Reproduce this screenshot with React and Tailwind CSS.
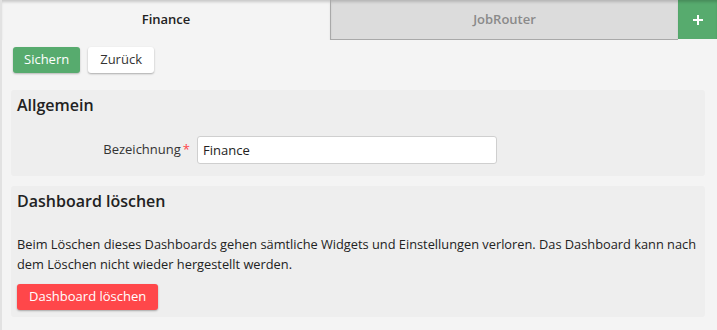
export default function App() {
  const tabShadow = 'shadow-[inset_0_3px_3px_-1px_rgba(0,0,0,0.18)]';

  return (
    <div
      className="min-h-[330px] bg-[#f4f4f4] border-l-2 border-[#e2e2e2] text-[13px] text-[#333]"
      style={{ fontFamily: '"Open Sans", "Liberation Sans", sans-serif' }}
    >
      {/* Tabs */}
      <div className="flex h-[40px]">
        <div className={`w-[328px] flex items-center justify-center font-semibold text-[#222] bg-[#f4f4f4] ${tabShadow}`}>
          Finance
        </div>
        <div className={`flex-1 flex items-center justify-center font-semibold text-[#8a8a8a] bg-[#dcdcdc] border-l border-b border-[#a9a9a9] ${tabShadow}`}>
          JobRouter
        </div>
        <button className={`w-[39px] h-[39px] flex items-center justify-center bg-[#57ab6e] text-white ${tabShadow}`}>
          <svg width="12" height="12" viewBox="0 0 12 12">
            <path d="M6 1v10M1 6h10" stroke="white" strokeWidth="2" />
          </svg>
        </button>
      </div>

      {/* Actions */}
      <div className="flex gap-2 pl-[11px] mt-[7px]">
        <button className="h-[26px] px-[11px] rounded-[3px] bg-[#57ab6e] text-white shadow-[0_1px_2px_rgba(0,0,0,0.25)]">
          Sichern
        </button>
        <button className="h-[26px] px-3 rounded-[3px] bg-white text-[#333] shadow-[0_1px_2px_rgba(0,0,0,0.3)]">
          Zurück
        </button>
      </div>

      <div className="pl-[9px] pr-[12px] mt-[17px] flex flex-col gap-[10px]">
        {/* Allgemein */}
        <section className="bg-[#eeeeee] rounded-[3px] px-[6px] pt-[4px] pb-[12px]">
          <h2 className="text-[16px] leading-[22px] font-semibold text-[#222]">Allgemein</h2>
          <div className="flex items-center mt-[20px]">
            <label className="w-[180px] pr-[7px] text-right">
              Bezeichnung<span className="text-[#ff4449] ml-[2px]">*</span>
            </label>
            <input
              defaultValue="Finance"
              className="w-[300px] h-[28px] px-[5px] bg-white border border-[#cfcfcf] rounded-[3px] text-[13px] text-[#222] outline-none"
            />
          </div>
        </section>

        {/* Dashboard löschen */}
        <section className="bg-[#eeeeee] rounded-[3px] px-[6px] pt-[4px] pb-[7px]">
          <h2 className="text-[16px] leading-[22px] font-semibold text-[#222]">Dashboard löschen</h2>
          <p className="mt-[22px] text-[12.8px] leading-[20px] text-[#222]">
            Beim Löschen dieses Dashboards gehen sämtliche Widgets und Einstellungen verloren. Das Dashboard kann nach dem Löschen nicht wieder hergestellt werden.
          </p>
          <button className="mt-[10px] h-[26px] px-3 rounded-[3px] bg-[#ff474a] text-white shadow-[0_1px_2px_rgba(0,0,0,0.3)]">
            Dashboard löschen
          </button>
        </section>
      </div>
    </div>
  );
}
